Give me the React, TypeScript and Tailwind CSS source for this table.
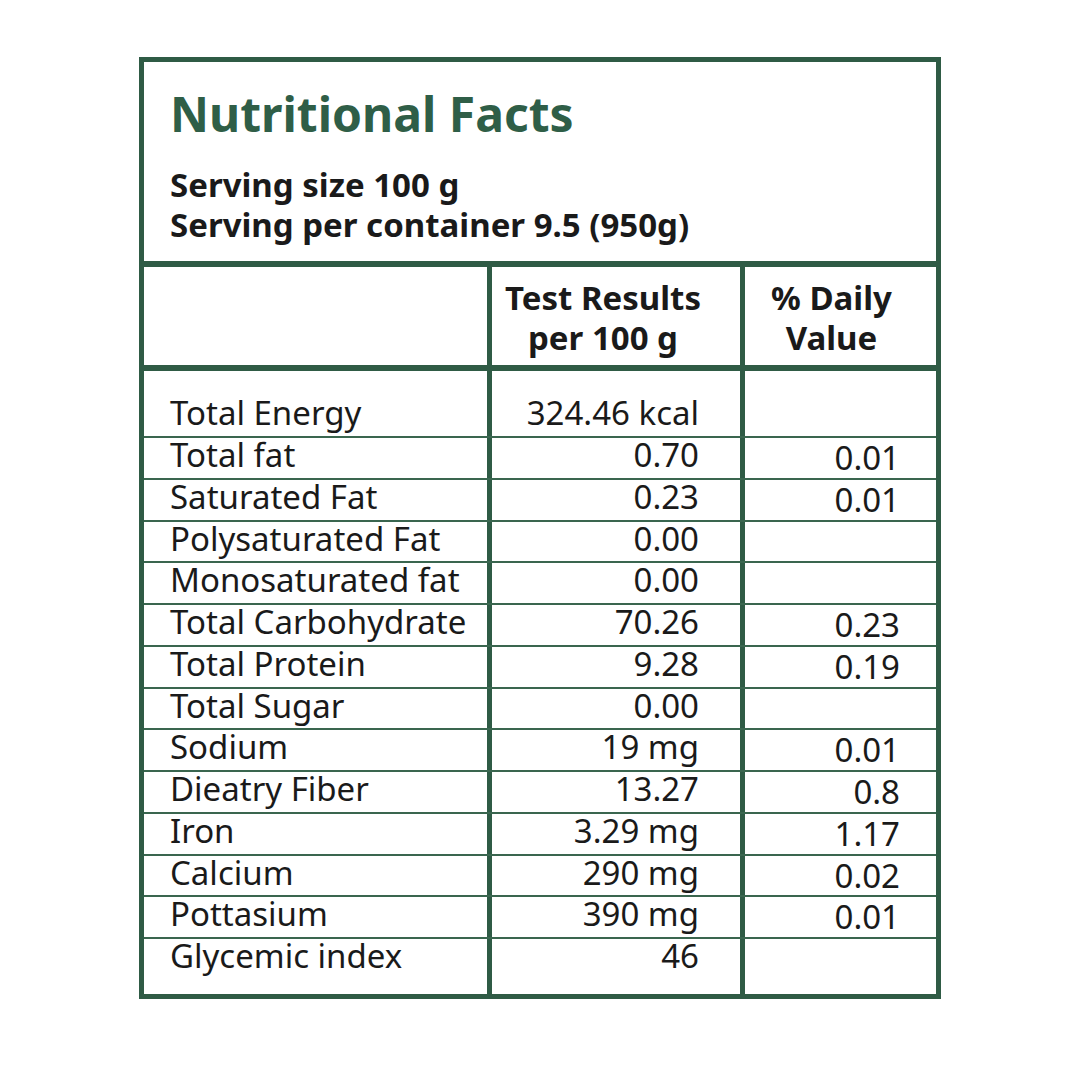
const rows: [string, string, string][] = [
  ["Total fat", "0.70", "0.01"],
  ["Saturated Fat", "0.23", "0.01"],
  ["Polysaturated Fat", "0.00", ""],
  ["Monosaturated fat", "0.00", ""],
  ["Total Carbohydrate", "70.26", "0.23"],
  ["Total Protein", "9.28", "0.19"],
  ["Total Sugar", "0.00", ""],
  ["Sodium", "19 mg", "0.01"],
  ["Dieatry Fiber", "13.27", "0.8"],
  ["Iron", "3.29 mg", "1.17"],
  ["Calcium", "290 mg", "0.02"],
  ["Pottasium", "390 mg", "0.01"],
];

const Row = ({ name, value, daily, last }: { name: string; value: string; daily: string; last?: boolean }) => (
  <div className={`flex ${last ? "h-[55px]" : "h-[41.75px] border-b-2 border-[#3a664f]"}`}>
    <div className="w-[348px] shrink-0 border-r-[5px] border-[#2f5b45] pl-[26px] leading-[34px]">{name}</div>
    <div className="w-[253px] shrink-0 border-r-[5px] border-[#2f5b45] pr-[41px] text-right leading-[34px]">{value}</div>
    <div className="flex-1 pr-[36px] pt-[3px] text-right leading-[34px]">{daily}</div>
  </div>
);

export default function App() {
  return (
    <div className="min-h-[1080px] w-full bg-white pt-[57px]" style={{ fontFamily: '"Noto Sans", sans-serif' }}>
      <div className="mx-auto w-[802px] border-[5px] border-[#2f5b45] text-[33px] text-[#1a1a1a]">
        {/* header */}
        <div className="border-b-[6px] border-[#2f5b45] pl-[26px] pt-[24px] pb-[16px]">
          <h1 className="text-[48px] font-bold leading-[56px] text-[#2f5e47]">Nutritional Facts</h1>
          <div className="mt-[23px] font-bold leading-[40px]">
            <p>Serving size 100 g</p>
            <p>Serving per container 9.5 (950g)</p>
          </div>
        </div>

        {/* column heads */}
        <div className="flex h-[104px] border-b-[6px] border-[#2f5b45] font-bold leading-[40px]">
          <div className="w-[348px] shrink-0 border-r-[5px] border-[#2f5b45]" />
          <div className="w-[253px] shrink-0 border-r-[5px] border-[#2f5b45] pt-[11px] pr-[26px] text-center">
            <p>Test Results</p>
            <p>per 100 g</p>
          </div>
          <div className="flex-1 pt-[11px] pr-[18px] text-center">
            <p>% Daily</p>
            <p>Value</p>
          </div>
        </div>

        {/* body */}
        <div className="flex h-[67px] border-b-2 border-[#3a664f] leading-[40px]">
          <div className="w-[348px] shrink-0 border-r-[5px] border-[#2f5b45] pl-[26px] pt-[22px]">Total Energy</div>
          <div className="w-[253px] shrink-0 border-r-[5px] border-[#2f5b45] pr-[41px] pt-[22px] text-right">324.46 kcal</div>
          <div className="flex-1" />
        </div>
        {rows.map(([n, v, d]) => (
          <Row key={n} name={n} value={v} daily={d} />
        ))}
        <Row name="Glycemic index" value="46" daily="" last />
      </div>
    </div>
  );
}
